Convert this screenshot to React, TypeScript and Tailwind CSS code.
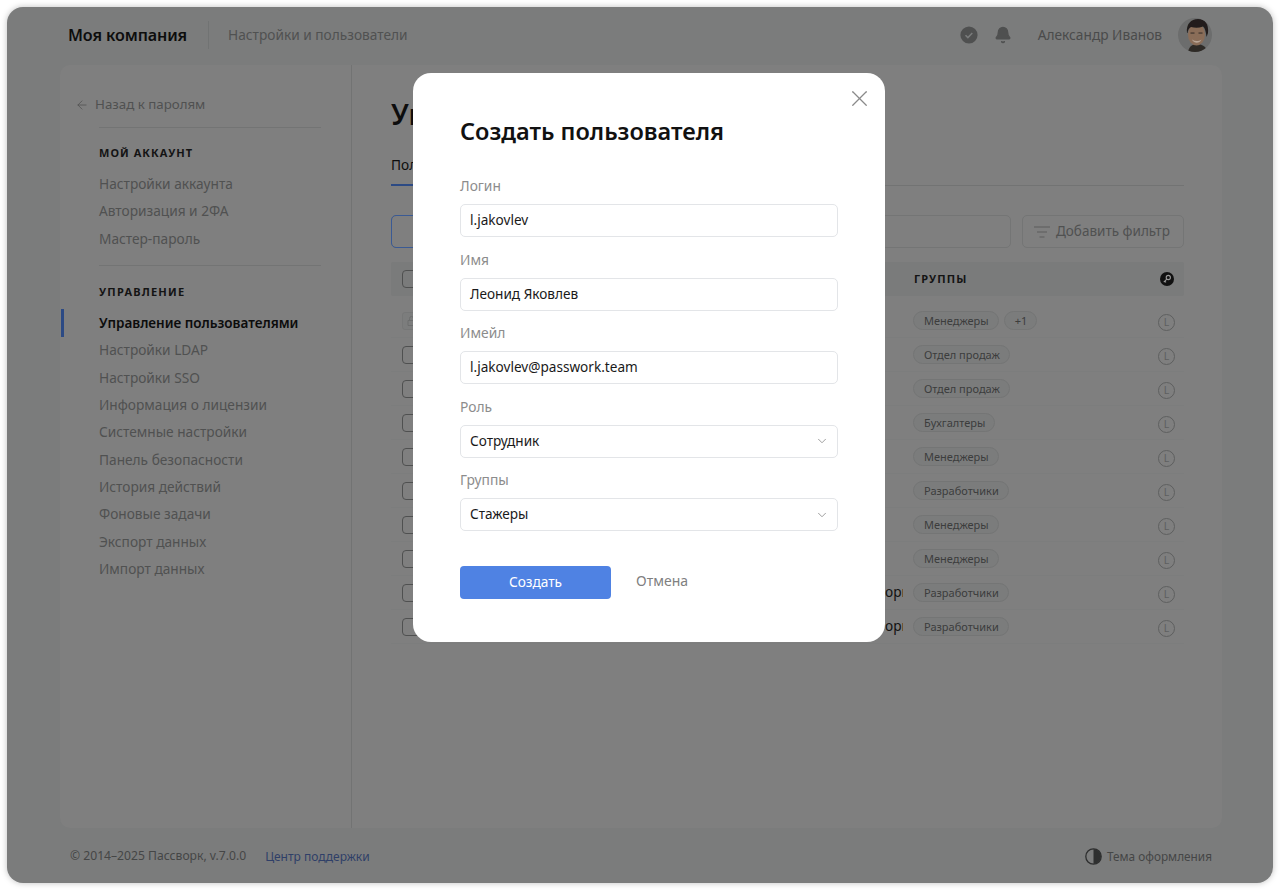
import { ChevronDown, X, ArrowLeft, Bell } from "lucide-react";

const font = "font-['Noto_Sans','Open_Sans',sans-serif]";

const Item = ({ t, active }: { t: string; active?: boolean }) => (
  <div className={`relative h-[27.33px] flex items-center pl-[39px] ${active ? "text-[13.500px] text-[#0c0c0c] font-semibold" : "text-[13.700px] text-[#505151]"}`}>
    {active && <span className="absolute left-[1px] top-0 h-[28px] w-[3px] bg-[#2c4a84]" />}
    {t}
  </div>
);

const Field = ({ label, value, select }: { label: string; value: string; select?: boolean }) => (
  <div className="flex flex-col mb-[11.500px]">
    <div className="text-[13.800px] leading-[20px] text-[#8c8c8c] mt-[1px] mb-[8px]">{label}</div>
    <div className="h-[33px] rounded-[5px] border border-[#e3e5e8] pl-[9px] pr-[8px] flex items-center justify-between text-[13.600px] text-[#1a1a1a]">
      <span>{value}</span>
      {select && <ChevronDown size={14} strokeWidth={1.3} className="text-[#808080]" />}
    </div>
  </div>
);

const rows: [string, string?, string?][] = [
  ["Менеджеры", "+1"],
  ["Отдел продаж"],
  ["Отдел продаж"],
  ["Бухгалтеры"],
  ["Менеджеры"],
  ["Разработчики"],
  ["Менеджеры"],
  ["Менеджеры"],
  ["Разработчики", undefined, "орп"],
  ["Разработчики", undefined, "орп"],
];

const Tag = ({ t }: { t: string }) => (
  <span className="h-[19px] pl-[10px] pr-[9px] rounded-full border border-[#747575] bg-[#7b7c7c] text-[11px] leading-none flex items-center text-[#3c3d3d]">{t}</span>
);

export default function App() {
  return (
    <div className={`${font} w-[1280px] h-[890px] bg-white p-[7px] overflow-hidden`}>
      <div className="relative h-[876px] w-[1266px] rounded-[16px] bg-[#7b7c7c] flex flex-col shadow-[0_0_6px_rgba(0,0,0,0.25)]">
        {/* Header */}
        <div className="h-[58px] shrink-0 flex items-center pb-[2px] pl-[61px] pr-[61px]">
          <span className="text-[16.100px] font-semibold text-[#0d0d0d] tracking-[-0.1px]">Моя компания</span>
          <span className="w-px h-[28px] bg-[#717373] ml-[21px] mr-[19px]" />
          <span className="text-[13.700px] text-[#505151]">Настройки и пользователи</span>
          <div className="ml-auto flex items-center">
            <svg width="18" height="18" viewBox="0 0 18 18" className="mr-[16px]">
              <circle cx="9" cy="9" r="8.600" fill="#4f5050" />
              <path d="M5.500 9.200l2.400 2.400 4.400-4.600" fill="none" stroke="#7a7c7c" strokeWidth="1.500" />
            </svg>
            <Bell size={18} fill="#4f5050" stroke="#4f5050" className="mr-[26px]" />
            <span className="text-[13.700px] text-[#4a4b4b] mr-[16px]">Александр Иванов</span>
            <svg width="34" height="34" viewBox="0 0 34 34" className="rounded-full">
              <defs>
                <filter id="soft"><feGaussianBlur stdDeviation="0.700" /></filter>
              </defs>
              <rect width="34" height="34" fill="#6c6d6d" />
              <g filter="url(#soft)">
                <path d="M10 34c1-6 5-8 9-8s9 2 11 8z" fill="#2e2a27" />
                <ellipse cx="18.500" cy="16.500" rx="8.500" ry="11" fill="#8a6d59" />
                <path d="M9 15C8 6 13 1 20 1c7 0 11 5 10 14l-1.500 4c-.5-5-1.500-9-3.500-10.500-4 1.500-8 1.500-12 .5-2 1-3 3-3.500 6z" fill="#211f1d" />
                <path d="M14 21.500c3 2 6.500 2 9.500 0-1 2.500-3 3.200-4.700 3.200s-3.800-.7-4.800-3.200z" fill="#b8a596" />
                <rect x="12.500" y="14.500" width="4" height="1.100" fill="#3a302a" />
                <rect x="20.500" y="14.500" width="4" height="1.100" fill="#3a302a" />
              </g>
            </svg>
          </div>
        </div>

        {/* Panel */}
        <div className="flex-1 ml-[53px] mr-[51px] rounded-[10px] bg-[#7f7f7f] flex min-h-0">
          <aside className="w-[292px] shrink-0 border-r border-[#727373] pt-[26px]">
            <div className="flex items-center pl-[15px] pt-[1px] h-[26px] text-[13.300px] text-[#505151]">
              <ArrowLeft size={14} strokeWidth={1.300} className="mr-[6px] text-[#505151]" />
              Назад к паролям
            </div>
            <div className="ml-[39px] mr-[30px] h-px bg-[#737474] mt-[10px]" />
            <div className="pl-[39px] mt-[18px] mb-[10.500px] text-[11px] leading-[14px] font-bold tracking-[1.050px] text-[#141414]">МОЙ АККАУНТ</div>
            <Item t="Настройки аккаунта" />
            <Item t="Авторизация и 2ФА" />
            <Item t="Мастер-пароль" />
            <div className="ml-[39px] mr-[30px] h-px bg-[#737474] mt-[12.500px]" />
            <div className="pl-[39px] mt-[19px] mb-[10.500px] text-[11px] leading-[14px] font-bold tracking-[1.200px] text-[#141414]">УПРАВЛЕНИЕ</div>
            <Item t="Управление пользователями" active />
            <Item t="Настройки LDAP" />
            <Item t="Настройки SSO" />
            <Item t="Информация о лицензии" />
            <Item t="Системные настройки" />
            <Item t="Панель безопасности" />
            <Item t="История действий" />
            <Item t="Фоновые задачи" />
            <Item t="Экспорт данных" />
            <Item t="Импорт данных" />
          </aside>
          <main className="flex-1 pl-[39px] pr-[38px] pt-[31px]">
            <div className="text-[28px] leading-[36px] font-semibold text-[#0d0d0d] whitespace-nowrap overflow-hidden">Управление</div>
            <div className="mt-[21px] h-[33px] border-b border-[#727373] text-[13.700px] text-[#0d0d0d] leading-[24px]">
              <span className="inline-block h-[33px] border-b-2 border-[#2c4a84] pr-[6px]">Пользователи</span>
            </div>
            <div className="mt-[29px] flex gap-[11px]">
              <div className="flex-1 h-[33px] rounded-[5px] flex border border-[#747575]">
                <div className="w-[100px] -m-px h-[33px] rounded-[5px] border border-[#3a5a94]" />
              </div>
              <div className="w-[162px] h-[33px] rounded-[5px] border border-[#747575] flex items-center pl-[11px] text-[13.500px] text-[#505151]">
                <svg width="16" height="12" viewBox="0 0 16 12" className="mr-[6px]" stroke="#5c5d5d" strokeWidth="1">
                  <path d="M0 1h16M3 6h10M5.500 11h5" />
                </svg>
                Добавить фильтр
              </div>
            </div>
            <div className="mt-[14px] h-[34px] rounded-[2px] bg-[#7a7b7b] flex items-center pl-[11px] pr-[10px]">
              <span className="w-[18px] h-[18px] rounded-[4px] border border-[#4f5050]" />
              <span className="ml-[494px] text-[11px] font-bold tracking-[1.100px] text-[#141414]">ГРУППЫ</span>
              <svg width="14" height="14" viewBox="0 0 14 14" className="ml-auto">
                <circle cx="7" cy="7" r="7" fill="#111" />
                <circle cx="8.300" cy="5.500" r="2.100" fill="none" stroke="#999" strokeWidth="1.100" />
                <path d="M6.800 7.100 L3.800 10.200 M4.800 9.200 L6 10.300" fill="none" stroke="#999" strokeWidth="1.100" />
              </svg>
            </div>
            <div className="mt-[8px] flex flex-col">
              {rows.map(([g, extra, clip], i) => (
                <div key={i} className="h-[34px] flex items-center pl-[11px] pr-[9px] border-b border-[#7c7d7d]">
                  {i === 0 ? (
                    <span className="w-[18px] h-[18px] rounded-[3px] border border-[#767777] bg-[#7c7d7d] flex items-center justify-center">
                      <svg width="9" height="10" viewBox="0 0 9 10">
                        <path d="M1 4.500h7v5h-7zM2.500 4.500v-2a2 2 0 0 1 4 0v2" fill="none" stroke="#6d6e6e" strokeWidth="1" />
                      </svg>
                    </span>
                  ) : (
                    <span className="w-[18px] h-[18px] rounded-[4px] border border-[#4f5050]" />
                  )}
                  <div className="ml-[465px] w-[18px] text-[13.700px] text-[#111] overflow-hidden whitespace-nowrap">{clip}</div>
                  <div className="ml-[10px] flex gap-[5px]"><Tag t={g} />{extra && <Tag t={extra} />}</div>
                  <span className="ml-auto mt-[3px] w-[17px] h-[17px] rounded-full border border-[#5e5f5f] text-[10.500px] leading-none text-[#5e5f5f] flex items-center justify-center">L</span>
                </div>
              ))}
            </div>
          </main>
        </div>

        {/* Footer */}
        <div className="h-[55px] shrink-0 flex items-center pt-[2px] pl-[63px] pr-[61px] text-[12.150px] text-[#454646]">
          <span>© 2014–2025 Пассворк, v.7.0.0</span>
          <span className="ml-[19px] text-[12px] text-[#2f3f68]">Центр поддержки</span>
          <div className="ml-auto flex items-center text-[11.800px] text-[#454646]">
            <svg width="17" height="17" viewBox="0 0 17 17" className="mr-[5px]">
              <circle cx="8.500" cy="8.500" r="7.700" fill="none" stroke="#2e2f2f" strokeWidth="1.300" />
              <path d="M8.500 1a7.500 7.500 0 0 1 0 15z" fill="#2e2f2f" />
            </svg>
            Тема оформления
          </div>
        </div>

        {/* Modal */}
        <div className="absolute left-[406px] top-[66px] w-[472px] h-[569px] bg-white rounded-[18px] pt-[42px] px-[47px]">
          <X size={27} strokeWidth={1.100} className="absolute right-[12px] top-[12px] text-[#8a8a8a]" />
          <div className="text-[23.500px] leading-[32px] font-semibold text-[#111]">Создать пользователя</div>
          <div className="mt-[28px]">
            <Field label="Логин" value="l.jakovlev" />
            <Field label="Имя" value="Леонид Яковлев" />
            <Field label="Имейл" value="l.jakovlev@passwork.team" />
            <Field label="Роль" value="Сотрудник" select />
            <Field label="Группы" value="Стажеры" select />
          </div>
          <div className="mt-[35px] flex items-center">
            <div className="w-[151px] h-[33px] pb-[1px] rounded-[4px] bg-[#4f82e3] text-white text-[13.700px] flex items-center justify-center">Создать</div>
            <div className="ml-[25px] pb-[4px] text-[14px] text-[#808080]">Отмена</div>
          </div>
        </div>
      </div>
    </div>
  );
}
